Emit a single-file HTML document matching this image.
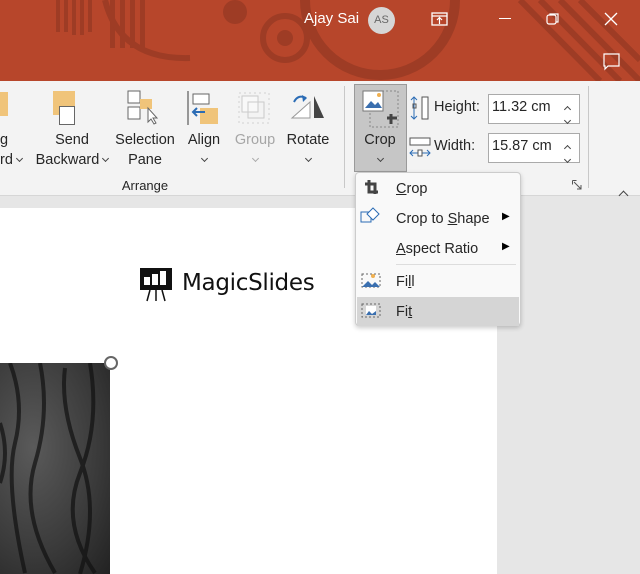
<!DOCTYPE html><html><head><style>
body{margin:0;width:640px;height:574px;overflow:hidden;font-family:"Liberation Sans",sans-serif;position:relative;background:#e6e6e6}
.a{position:absolute}
.t{font-size:14.5px;color:#262626;text-align:center;line-height:20px;white-space:nowrap}
.mi{position:absolute;left:40px;font-size:14.5px;color:#262626}
.cv{display:inline-block;width:4px;height:4px;border-right:1.2px solid #444;border-bottom:1.2px solid #444;transform:rotate(45deg);vertical-align:middle;margin-top:-4px}
.cu{display:inline-block;width:4px;height:4px;border-left:1.2px solid #444;border-top:1.2px solid #444;transform:rotate(45deg)}
</style></head><body>
<div class="a" style="left:0;top:0;width:640px;height:81px;background:#b7462b;overflow:hidden">
<svg width="640" height="81" class="a" style="left:0;top:0">
<g fill="#9e3c25"><rect x="56" y="0" width="4" height="32"/><rect x="64" y="0" width="4" height="32"/><rect x="72" y="0" width="4" height="35"/><rect x="80" y="0" width="4" height="35"/><rect x="88" y="0" width="4" height="32"/><rect x="110" y="0" width="5" height="48"/><rect x="120" y="0" width="5" height="48"/><rect x="130" y="0" width="5" height="48"/><rect x="140" y="0" width="5" height="48"/><circle cx="235" cy="12" r="12"/></g>
<circle cx="285" cy="38" r="22" fill="none" stroke="#9e3c25" stroke-width="6"/><circle cx="285" cy="38" r="8" fill="#9e3c25"/>
<path d="M105 0 Q120 60 190 58" fill="none" stroke="#9e3c25" stroke-width="6"/>
<circle cx="380" cy="0" r="75" fill="none" stroke="#9e3c25" stroke-width="10"/>
<path d="M520 0 L600 81 M540 0 L620 81 M560 0 L640 81 M580 0 L640 60" stroke="#9e3c25" stroke-width="6"/>
</svg>
<div class="a" style="left:304px;top:10px;color:#fff;font-size:15px">Ajay Sai</div>
<div class="a" style="left:368px;top:7px;width:27px;height:27px;border-radius:50%;background:#d6d6d6;color:#666;font-size:11px;text-align:center;line-height:27px">AS</div>
<svg class="a" style="left:430px;top:10px" width="20" height="18"><rect x="2" y="3" width="15" height="12" fill="none" stroke="#fff" stroke-width="1.3"/><path d="M2 6h15M9.5 14V8M7 10l2.5-2.5 2.5 2.5" stroke="#fff" fill="none" stroke-width="1.2"/></svg>
<div class="a" style="left:499px;top:18px;width:12px;height:1px;background:#fff"></div>
<svg class="a" style="left:546px;top:12px" width="14" height="14"><rect x="1" y="3" width="9" height="9" rx="2" fill="none" stroke="#fff" stroke-width="1.2"/><path d="M4 3V2h8v8h-2" fill="none" stroke="#fff" stroke-width="1.2"/></svg>
<svg class="a" style="left:604px;top:12px" width="14" height="14"><path d="M1 1L13 13M13 1L1 13" stroke="#fff" stroke-width="1.3"/></svg>
<svg class="a" style="left:602px;top:53px" width="20" height="18"><path d="M2 1h15v12H6l-3 3v-3H2z" fill="none" stroke="#fff" stroke-width="1.2"/></svg>
</div>
<div class="a" style="left:0;top:81px;width:640px;height:114px;background:#f3f3f3;border-bottom:1px solid #d6d6d6"></div>
<div class="a" style="left:0;top:92px;width:8px;height:24px;background:#f0c47a"></div>
<div class="t a" style="left:0;top:130px;width:30px;text-align:left">g<br>rd <span class="cv"></span></div>
<div class="a" style="left:53px;top:91px;width:22px;height:24px;background:#f0c47a"></div><div class="a" style="left:59px;top:106px;width:14px;height:17px;border:1px solid #666;background:#fff"></div>
<div class="t a" style="left:28px;top:130px;width:88px">Send<br>Backward <span class="cv"></span></div>
<svg class="a" style="left:126px;top:90px" width="36" height="36"><rect x="2" y="1" width="12" height="12" fill="#fff" stroke="#666"/><rect x="2" y="17" width="12" height="12" fill="#fff" stroke="#666"/><rect x="14" y="9" width="12" height="10" fill="#f0c47a"/><path d="M22 18v14l3-3 3 5 2-1-3-5h4z" fill="#fff" stroke="#666"/></svg>
<div class="t a" style="left:110px;top:130px;width:70px">Selection<br>Pane</div>
<svg class="a" style="left:186px;top:90px" width="36" height="36"><path d="M2 1v34" stroke="#666" stroke-width="1.3"/><rect x="7" y="4" width="16" height="10" fill="#fff" stroke="#666"/><rect x="14" y="18" width="18" height="16" fill="#f0c47a"/><path d="M19 22h-12M11 18l-4 4 4 4" stroke="#2b6cb5" stroke-width="2" fill="none"/></svg>
<div class="t a" style="left:180px;top:130px;width:48px">Align<br><span class="cv"></span></div>
<svg class="a" style="left:236px;top:90px" width="36" height="36" opacity=".45"><rect x="3" y="3" width="30" height="30" fill="none" stroke="#aaa" stroke-dasharray="2 3"/><rect x="6" y="6" width="16" height="16" fill="#fff" stroke="#999"/><rect x="12" y="12" width="16" height="16" fill="none" stroke="#999"/></svg>
<div class="t a" style="left:230px;top:130px;width:50px;color:#a6a6a6">Group<br><span class="cv" style="border-color:#aaa"></span></div>
<svg class="a" style="left:288px;top:92px" width="40" height="30"><path d="M4 26L22 10V26z" fill="#fff" stroke="#999"/><path d="M26 4L36 26H26z" fill="#444"/><path d="M6 10q4-8 12-4" stroke="#2b6cb5" stroke-width="2" fill="none"/><path d="M14 3l5 3-4 4" fill="#2b6cb5"/></svg>
<div class="t a" style="left:280px;top:130px;width:56px">Rotate<br><span class="cv"></span></div>
<div class="t a" style="left:60px;top:176px;width:170px;font-size:13px">Arrange</div>
<div class="a" style="left:344px;top:86px;width:1px;height:102px;background:#c8c8c8"></div>
<div class="a" style="left:354px;top:84px;width:51px;height:86px;background:#c6c6c6;border:1px solid #9a9a9a"></div>
<svg class="a" style="left:360px;top:88px" width="40" height="42"><rect x="10" y="3" width="28" height="36" fill="none" stroke="#888" stroke-dasharray="2 2"/><rect x="3" y="3" width="20" height="20" fill="#fff" stroke="#777"/><path d="M5 20l6-7 4 4 3-3 4 6z" fill="#3a6faf"/><circle cx="19" cy="7" r="2" fill="#f0b050"/><path d="M31 26v10M27 30h10" stroke="#444" stroke-width="3"/></svg>
<div class="t a" style="left:354px;top:130px;width:52px">Crop<br><span class="cv"></span></div>
<svg class="a" style="left:410px;top:95px" width="22" height="26"><path d="M4 2v22M1 5l3-3 3 3M1 21l3 3 3-3" stroke="#2b6cb5" fill="none"/><rect x="3" y="9" width="3" height="4" fill="none" stroke="#555"/><rect x="12" y="2" width="6" height="22" fill="#fff" stroke="#555"/></svg>
<div class="a" style="left:434px;top:99px;font-size:14.5px;color:#262626">Height:</div>
<div class="a" style="left:488px;top:94px;width:90px;height:28px;background:#fff;border:1px solid #aaa"></div>
<div class="a" style="left:492px;top:99px;font-size:14.5px;color:#262626">11.32 cm</div>
<div class="a" style="left:565px;top:99px"><span class="cu"></span></div><div class="a" style="left:565px;top:114px"><span class="cv"></span></div>
<svg class="a" style="left:408px;top:136px" width="24" height="22"><rect x="2" y="2" width="20" height="7" fill="#fff" stroke="#555"/><path d="M2 17h20M5 14l-3 3 3 3M19 14l3 3-3 3" stroke="#2b6cb5" fill="none"/><rect x="10" y="14" width="4" height="6" fill="#fff" stroke="#555"/></svg>
<div class="a" style="left:434px;top:138px;font-size:14.5px;color:#262626">Width:</div>
<div class="a" style="left:488px;top:133px;width:90px;height:28px;background:#fff;border:1px solid #aaa"></div>
<div class="a" style="left:492px;top:138px;font-size:14.5px;color:#262626">15.87 cm</div>
<div class="a" style="left:565px;top:138px"><span class="cu"></span></div><div class="a" style="left:565px;top:153px"><span class="cv"></span></div>
<div class="a" style="left:588px;top:86px;width:1px;height:102px;background:#c8c8c8"></div>
<svg class="a" style="left:572px;top:180px" width="10" height="10"><path d="M0.5 0.5h4M0.5 0.5v4M2 2l7 7M5 9h4V5" stroke="#555" fill="none"/></svg>
<div class="a" style="left:620px;top:186px"><span class="cu" style="width:6px;height:6px"></span></div>
<div class="a" style="left:0;top:208px;width:497px;height:366px;background:#fff"></div>
<svg class="a" style="left:140px;top:268px" width="34" height="34"><rect x="0" y="0" width="32" height="22" fill="#111"/><rect x="4" y="9" width="6" height="8" fill="#fff"/><rect x="12" y="6" width="6" height="11" fill="#fff"/><rect x="20" y="3" width="6" height="14" fill="#fff"/><path d="M10 22l-3 11M16 22v11M22 22l3 11" stroke="#111" stroke-width="1.5"/></svg>
<div class="a" style="left:182px;top:270px;font-size:23px;font-family:'DejaVu Sans',sans-serif;color:#111;letter-spacing:-0.3px">MagicSlides</div>
<div class="a" style="left:0;top:363px;width:110px;height:211px;background:radial-gradient(ellipse at 30% 40%,#5a5a5a,#3a3a3a 60%,#222)"></div>
<svg class="a" style="left:0;top:363px" width="110" height="211"><g stroke="#111" stroke-width="4" fill="none" opacity=".7"><path d="M10 0q15 40 5 80t10 130"/><path d="M40 0q10 50 -5 100t20 110"/><path d="M65 5q-5 40 15 90t0 116"/><path d="M90 0q10 60 -10 110t15 100"/><path d="M0 60q10 30 0 60"/></g></svg>
<div class="a" style="left:104px;top:356px;width:10px;height:10px;border-radius:50%;border:2px solid #666;background:#fff"></div>
<div class="a" style="left:355px;top:172px;width:164px;height:152px;background:#f9f9f9;border:1px solid #ccc;border-radius:4px;box-shadow:0 2px 5px rgba(0,0,0,.2)">
<svg class="a" style="left:6px;top:5px" width="18" height="18"><path d="M7 2v12h9M3 6h10v10" stroke="#444" stroke-width="3" fill="none"/></svg>
<div class="mi" style="top:8px"><u>C</u>rop</div>
<svg class="a" style="left:4px;top:33px" width="22" height="20"><rect x="1" y="6" width="10" height="10" fill="none" stroke="#2b6cb5"/><path d="M13 2l6 6-6 6-6-6z" fill="#fff" stroke="#2b6cb5"/></svg>
<div class="mi" style="top:38px">Crop to <u>S</u>hape</div><div class="a" style="left:146px;top:38px;font-size:10px">▶</div>
<div class="mi" style="top:68px"><u>A</u>spect Ratio</div><div class="a" style="left:146px;top:68px;font-size:10px">▶</div>
<div class="a" style="left:40px;top:91px;width:120px;height:1px;background:#ddd"></div>
<svg class="a" style="left:5px;top:100px" width="20" height="16"><rect x="1" y="1" width="18" height="13" fill="none" stroke="#666" stroke-dasharray="2 2"/><path d="M1 14l6-6 4 4 3-3 5 5z" fill="#3a6faf"/><circle cx="12" cy="3" r="2" fill="#f0b050"/></svg>
<div class="mi" style="top:101px">Fi<u>l</u>l</div>
<div class="a" style="left:1px;top:124px;width:162px;height:29px;background:#d5d5d5"></div>
<svg class="a" style="left:5px;top:130px" width="20" height="16"><rect x="1" y="1" width="18" height="13" fill="none" stroke="#666" stroke-dasharray="2 2"/><rect x="5" y="3" width="10" height="9" fill="#fff"/><path d="M5 12l3-4 3 3 4-3v4z" fill="#3a6faf"/></svg>
<div class="mi" style="top:131px">Fi<u>t</u></div>
</div>
</body></html>
